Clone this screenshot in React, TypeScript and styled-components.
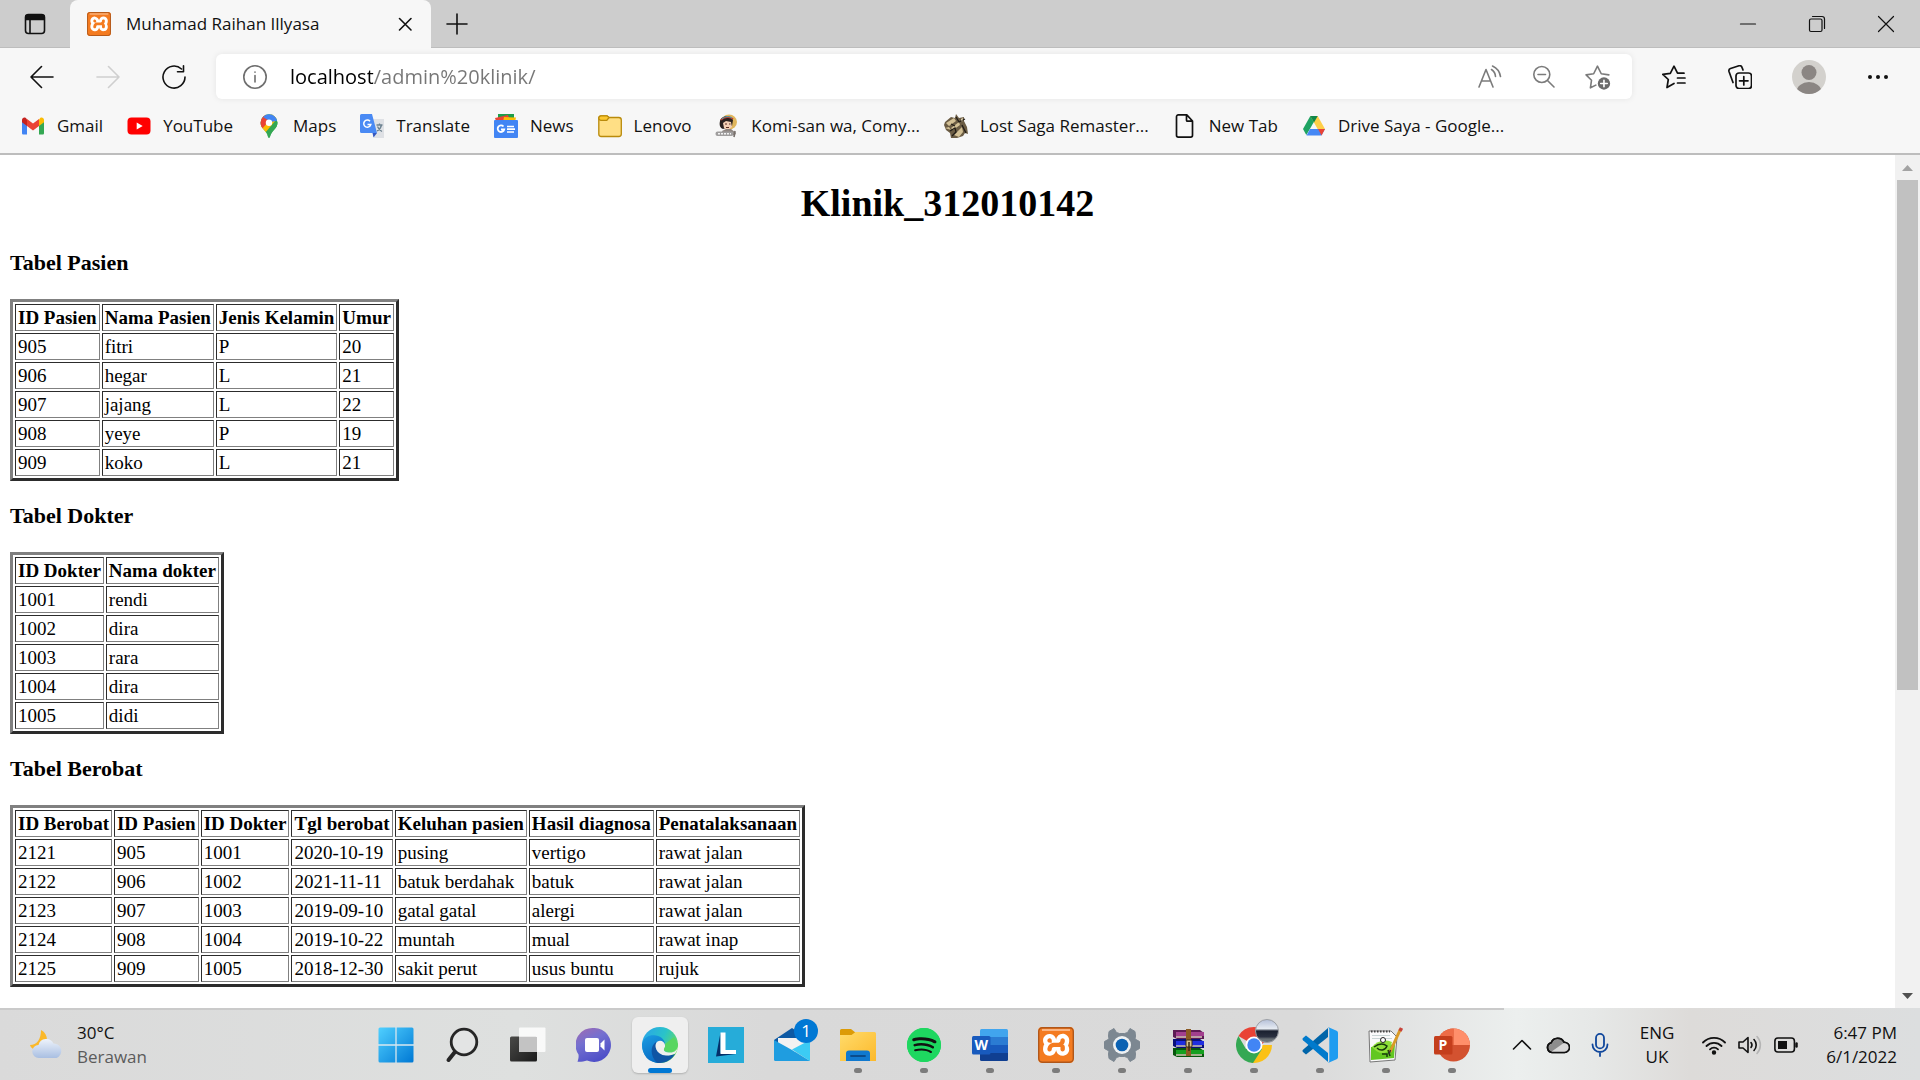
import React from "react";
import styled, { createGlobalStyle } from "styled-components";
import { SiXampp, SiSpotify } from "react-icons/si";

const GlobalStyle = createGlobalStyle`
  *, *::before, *::after { box-sizing: border-box; }
  body { margin: 0; background: #fff; }
  button { border: 0; background: none; padding: 0; margin: 0; color: inherit; font: inherit; cursor: pointer; }
  svg { display: block; flex: none; }
`;

const ui = `"Segoe UI", "Open Sans", "Noto Sans", sans-serif`;

const Desktop = styled.div`
  display: flex;
  flex-direction: column;
  height: 100vh;
  min-width: 0;
  overflow: hidden;
  font-family: ${ui};
  font-size: 17px;
  color: #111;
`;

/* ---------- browser chrome ---------- */

const TabStrip = styled.header`
  display: flex;
  flex: none;
  height: 48px;
  background: #cdcdcd;
  box-shadow: inset 0 -1px 0 #bdbdbd;
`;

const StripButton = styled.button<{ $width: number }>`
  display: flex;
  align-items: center;
  justify-content: center;
  width: ${(p) => p.$width}px;
  height: 48px;
`;

const Tab = styled.div`
  display: flex;
  align-items: center;
  width: 361px;
  height: 48px;
  padding: 0 14px 0 17px;
  background: #f7f7f7;
  border-radius: 8px 8px 0 0;
`;

const TabTitle = styled.span`
  flex: 1;
  margin-left: 15px;
  padding-bottom: 2px;
  white-space: nowrap;
`;

const WindowControls = styled.div`
  display: flex;
  margin-left: auto;
`;

const Toolbar = styled.nav`
  display: flex;
  flex: none;
  align-items: center;
  height: 57px;
  padding: 0 9px;
  background: #f7f7f7;
`;

const ToolButton = styled.button<{ $width?: number }>`
  display: flex;
  align-items: center;
  justify-content: center;
  flex: none;
  width: ${(p) => p.$width ?? 66}px;
  height: 44px;
`;

const AddressBar = styled.form`
  display: flex;
  flex: 1;
  align-items: center;
  height: 45px;
  margin: 0 9px;
  padding: 0 7px 0 12px;
  background: #fff;
  border-radius: 6px;
  box-shadow: 0 0 6px rgba(0, 0, 0, 0.08);
`;

const AddressInput = styled.input`
  flex: 1;
  min-width: 0;
  height: 30px;
  margin-left: 8px;
  padding: 0;
  border: 0;
  outline: 0;
  font: 20px ${ui};
  color: transparent;
  background: linear-gradient(90deg, #000 83px, #767676 83px);
  background-clip: text;
  -webkit-background-clip: text;
`;

const BookmarksBar = styled.nav`
  display: flex;
  flex: none;
  align-items: center;
  gap: 24px;
  height: 50px;
  padding: 0 21px 7px;
  background: #f7f7f7;
  border-bottom: 2px solid #bdbdbd;
`;

const Bookmark = styled.a`
  display: flex;
  align-items: center;
  gap: 12px;
  white-space: nowrap;
  text-decoration: none;
  color: #111;
`;

/* ---------- page ---------- */

const Viewport = styled.div`
  display: flex;
  flex: 1;
  min-height: 0;
  background: #fff;
`;

const Page = styled.main`
  display: flow-root;
  flex: 1;
  min-width: 0;
  overflow: hidden;
  padding: 0 10px;
  font-family: "Liberation Serif", "Times New Roman", serif;
  font-size: 19px;
  color: #000;
`;

const PageTitle = styled.h1`
  margin: 26px 0 25px;
  font-size: 38px;
  line-height: 44px;
  text-align: center;
`;

const Heading = styled.h3`
  margin: 0 0 24px;
  font-size: 22px;
  line-height: 25px;
`;

const Table = styled.table`
  margin-bottom: 22px;
  border: 3px solid;
  border-color: #808080 #2c2c2c #2c2c2c #808080;
  border-collapse: separate;
  border-spacing: 2px;
  th, td {
    padding: 1px 2px;
    border: 1px solid;
    border-color: #2c2c2c #808080 #808080 #2c2c2c;
    line-height: 23px;
    text-align: left;
    white-space: nowrap;
  }
`;

const Scrollbar = styled.div`
  display: flex;
  flex-direction: column;
  align-items: center;
  width: 25px;
  background: #f1f1f1;
`;

const ScrollArrow = styled.button`
  display: flex;
  align-items: center;
  justify-content: center;
  flex: none;
  width: 25px;
  height: 25px;
`;

const ScrollTrack = styled.div`
  flex: 1;
  width: 21px;
`;

const ScrollThumb = styled.div`
  height: 63.5%;
  background: #c1c1c1;
`;

/* ---------- taskbar ---------- */

const Taskbar = styled.footer`
  display: flex;
  flex: none;
  align-items: center;
  height: 72px;
  padding-top: 2px;
  background:
    linear-gradient(#cacaca, #cacaca) 0 0 / calc(100% - 416px) 2px no-repeat,
    linear-gradient(90deg, #dadada 0, #dee0df 27%, #d9d9d9 40%, #dadada 68%, #ecefee 79%, #e6e8e7 83%, #dddbd9 88%, #dcdedf 100%);
`;

const Weather = styled.button`
  display: flex;
  align-items: center;
  gap: 13px;
  width: 362px;
  padding-left: 27px;
  text-align: left;
`;

const Lines = styled.span<{ $align?: string }>`
  display: flex;
  flex-direction: column;
  line-height: 24px;
  text-align: ${(p) => p.$align ?? "left"};
`;

const Muted = styled.span`
  color: #5b5b5b;
`;

const Apps = styled.div`
  display: flex;
  gap: 10px;
  padding-left: 6px;
`;

const AppButton = styled.button<{ $active?: boolean }>`
  display: flex;
  flex-direction: column;
  align-items: center;
  justify-content: space-between;
  width: 56px;
  height: 56px;
  padding-top: 10px;
  border-radius: 6px;
  background: ${(p) => (p.$active ? "#efefef" : "transparent")};
  box-shadow: ${(p) => (p.$active ? "0 1px 2px rgba(0,0,0,.2)" : "none")};
`;

const IconHolder = styled.span`
  position: relative;
  width: 36px;
  height: 36px;
`;

const Badge = styled.span`
  position: absolute;
  top: -8px;
  right: -8px;
  width: 24px;
  height: 24px;
  border-radius: 50%;
  background: #0078d4;
  color: #fff;
  font-size: 17px;
  line-height: 24px;
  text-align: center;
`;

const Indicator = styled.span<{ $state: "none" | "open" | "active" }>`
  width: ${(p) => (p.$state === "active" ? 24 : 8)}px;
  height: 5px;
  border-radius: 3px;
  background: ${(p) => (p.$state === "none" ? "transparent" : p.$state === "open" ? "#7c7c7c" : "#0078d4")};
`;

const Tray = styled.div`
  display: flex;
  align-items: center;
  margin-left: auto;
  padding-right: 23px;
`;

const TrayButton = styled.button<{ $width: number }>`
  display: flex;
  align-items: center;
  justify-content: center;
  width: ${(p) => p.$width}px;
  height: 48px;
`;

const Clock = styled.button`
  width: 87px;
`;

/* ---------- icons ---------- */

type LineProps = { size?: number; color?: string; width?: number; children: React.ReactNode };
const Line = ({ size = 24, color = "#111", width = 1.6, children }: LineProps) => (
  <svg width={size} height={size} viewBox="0 0 24 24" fill="none" stroke={color} strokeWidth={width} strokeLinecap="round" strokeLinejoin="round">
    {children}
  </svg>
);

const XamppIcon = ({ size }: { size: number }) => (
  <svg width={size} height={size} viewBox="0 0 36 36">
    <rect x="2" y="2" width="32" height="32" rx="3" fill="#fff" />
    <SiXampp x="0" y="0" size={36} color="#f47b20" />
    <rect x="0.7" y="0.7" width="34.6" height="34.6" rx="4" fill="none" stroke="#b0571a" strokeWidth="1.4" />
    <path d="M4 3h28" stroke="#fbb582" strokeWidth="2" />
  </svg>
);

const GmailIcon = () => (
  <svg width="24" height="24" viewBox="0 0 24 24">
    <path d="M1 6v13.200c0 .8.600 1.300 1.300 1.300H6V10z" fill="#4285f4" />
    <path d="M23 6v13.200c0 .8-.6 1.300-1.300 1.300H18V10z" fill="#34a853" />
    <path d="M18 5.500V12l5-3.800V6c0-2-2.200-3.200-3.800-2z" fill="#fbbc04" />
    <path d="M6 12V5l6 4.600L18 5v7l-6 4.600z" fill="#ea4335" />
    <path d="M1 6v2.200L6 12V5.300L4.800 4C3.200 2.800 1 4 1 6z" fill="#c5221f" />
  </svg>
);
const YoutubeIcon = () => (
  <svg width="24" height="24" viewBox="0 0 24 24">
    <rect x="0.500" y="3.500" width="23" height="17" rx="4" fill="#f00" />
    <path d="M9.700 8.500v7l6-3.500z" fill="#fff" />
  </svg>
);
const MapsIcon = () => (
  <svg width="24" height="24" viewBox="0 0 24 24">
    <clipPath id="pin"><path d="M12 0.300a8.500 8.500 0 0 0-8.500 8.500c0 6 6.500 8 7.500 14 .3 1.200 1.700 1.200 2 0 1-6 7.500-8 7.500-14A8.500 8.500 0 0 0 12 .3z" /></clipPath>
    <g clipPath="url(#pin)">
      <path d="M0 0h24v24H0z" fill="#34a853" />
      <path d="M0 16L14 0h10L8 19z" fill="#fbbc04" />
      <path d="M0 14V0h8l4 7-8 9z" fill="#ea4335" />
      <path d="M6 3l4-3h14v6L14 8z" fill="#4285f4" />
      <path d="M24 3L12 17 9 24h15z" fill="#34a853" />
    </g>
    <circle cx="12" cy="8.800" r="3.200" fill="#fff" />
  </svg>
);
const TranslateIcon = () => (
  <svg width="24" height="24" viewBox="0 0 24 24">
    <path d="M9 5h15v19H14z" fill="#dfe1e5" />
    <path d="M1.500 0H12l5 19H1.500A1.500 1.500 0 0 1 0 17.500v-16A1.500 1.500 0 0 1 1.500 0z" fill="#4a8af4" />
    <path d="M12.500 19H17l-3.500 4.500z" fill="#3457c0" />
    <path d="M10 7.200a3.600 3.600 0 1 0 .8 3.400H7.500" fill="none" stroke="#fff" strokeWidth="1.500" />
    <path d="M16.500 11h6M19.500 9.500V11M21.500 11c-.6 3-2.500 5-4.500 6M17.500 12.500c1 2.500 2.500 4 4.500 5" stroke="#6d8290" strokeWidth="1.300" fill="none" />
  </svg>
);
const NewsIcon = () => (
  <svg width="24" height="24" viewBox="0 0 24 24">
    <path d="M4 0h16v6H4z" fill="#1e9e4a" />
    <path d="M1 4l13-3 2 6H2z" fill="#ea4335" />
    <path d="M10 3l12 .5L21 8H9z" fill="#fbbc04" />
    <rect y="6" width="24" height="18" rx="1" fill="#4285f4" />
    <path d="M9.500 12.500a3.300 3.300 0 1 0 .7 3H7" fill="none" stroke="#fff" strokeWidth="1.800" />
    <path d="M13 12.500h7M13 15.200h8M13 18h7" stroke="#fff" strokeWidth="1.700" />
  </svg>
);
const FolderIcon = () => (
  <svg width="24" height="24" viewBox="0 0 24 24" stroke="#b98a0b" strokeWidth="1.300">
    <path d="M.8 4v16a2.500 2.500 0 0 0 2.500 2.500h17.500a2.500 2.500 0 0 0 2.500-2.500V6a2.500 2.500 0 0 0-2.500-2.500H11L9 1.800H3A2.200 2.200 0 0 0 .8 4z" fill="#ffdf85" />
    <path d="M.8 4A2.200 2.200 0 0 1 3 1.800h6l2 1.700-2.200 2.800H3A2.200 2.200 0 0 1 .8 4z" fill="#fcc830" />
  </svg>
);
const ComicIcon = () => (
  <svg width="24" height="24" viewBox="0 0 24 24">
    <ellipse cx="14" cy="8" rx="8" ry="7.500" fill="#e0b65c" />
    <path d="M5 7c1-5 10-7 13-1l-1 6-9 3c-3-1-4-4-3-8z" fill="#2a211e" />
    <path d="M6 6c3-3 9-4 12-1" stroke="#c03b2b" strokeWidth="1.600" fill="none" />
    <path d="M7 5c3-3 7-3 10-1" stroke="#4ba3b8" strokeWidth="1" fill="none" />
    <path d="M8 9l3-2 5 1 1 5-4 3-4-2z" fill="#f3cfb4" />
    <path d="M10 10h2M14 10h1.500M11 13.500h3" stroke="#5a2d20" />
    <path d="M7 17l4-2h5l5 4-1 2H8z" fill="#8e8580" />
    <rect x="0.500" y="17.500" width="18" height="4.500" rx="2" fill="#a09e9e" />
    <path d="M3 19.700h13" stroke="#f2f2f2" strokeWidth="1.500" strokeDasharray="2 1" />
    <path d="M20 17l-1 6" stroke="#77706c" strokeWidth="1.600" />
  </svg>
);
const SagaIcon = () => (
  <svg width="24" height="24" viewBox="0 0 24 24">
    <path d="M1 8l6-5 4 1 1-4 3 4 5-1v4l3 6 1 7-3-1-2 3-6 2H7l-1-5-4-3-2-5z" fill="#6b5c44" />
    <path d="M2 9l8-5 2 3-7 5zM7 14l8-6 1 3-7 5zM10 21l8-8 1 5-4 5zM1 14l4-1 2 3z" fill="#d3c095" />
    <path d="M12 3l3 5 6-3M7 10l4 2M6 17l5-3 1 4-4 4M18 11l4 8" stroke="#211c16" strokeWidth="1.300" fill="none" />
    <path d="M17 5l2-1-1 4z" fill="#efe2c0" />
  </svg>
);
const FileIcon = () => (
  <Line width={1.7}>
    <path d="M5.500.9h8.300L19.500 7v14.300a1.800 1.800 0 0 1-1.800 1.800H5.300a1.800 1.800 0 0 1-1.800-1.800V2.700A1.800 1.800 0 0 1 5.500.9zM13.500 1v5.200a1 1 0 0 0 1 1h5" />
  </Line>
);
const DriveIcon = () => (
  <svg width="24" height="24" viewBox="0 0 24 24">
    <path d="M8.300 2h7L8 14.800 4.300 21 1 15z" fill="#1ea362" />
    <path d="M8.300 2h7.400L23 15h-7.400z" fill="#ffcf48" />
    <path d="M12 8.500L8.300 2h7.400z" fill="#11874a" />
    <path d="M8 15h15l-3.500 6.500h-15z" fill="#4688f4" />
    <path d="M16 15h7l-3.500 6.500z" fill="#ea4335" />
  </svg>
);

const WindowsIcon = () => (
  <svg width="36" height="36" viewBox="0 0 36 36">
    <defs>
      <linearGradient id="win" x1="0" y1="0" x2="1" y2="1"><stop stopColor="#50d0ff" /><stop offset="1" stopColor="#0078d4" /></linearGradient>
    </defs>
    <rect x="0.500" y="0.500" width="35" height="35" rx="1.500" fill="url(#win)" />
    <path d="M18 0v36M0 18h36" stroke="#d7e7ef" strokeWidth="1.300" />
  </svg>
);
const SearchIcon = () => (
  <svg width="36" height="36" viewBox="0 0 36 36" fill="none" stroke="#262626">
    <circle cx="20" cy="15" r="12.800" fill="#e3e4e4" strokeWidth="2.800" />
    <path d="M10.500 25.500L4.500 33" strokeWidth="4" strokeLinecap="round" />
  </svg>
);
const TaskViewIcon = () => (
  <svg width="36" height="36" viewBox="0 0 36 36">
    <defs>
      <linearGradient id="tv" x1="0" y1="0" x2="1" y2="1"><stop stopColor="#4a4a48" /><stop offset="1" stopColor="#1a1a1a" /></linearGradient>
    </defs>
    <rect x="0" y="9.500" width="27" height="25" rx="1.500" fill="url(#tv)" />
    <rect x="9" y="0.500" width="26.500" height="24.500" rx="1" fill="#fff" fillOpacity=".82" />
    <path d="M9 10h18v15H9z" fill="#c3c3c3" />
  </svg>
);
const ChatIcon = () => (
  <svg width="36" height="36" viewBox="0 0 36 36">
    <defs>
      <linearGradient id="chat" x1="0" y1="0" x2="0.500" y2="1"><stop stopColor="#a26ab0" /><stop offset=".45" stopColor="#7470d0" /><stop offset="1" stopColor="#4f50c8" /></linearGradient>
    </defs>
    <path d="M18.500 1a17 17 0 1 1-7.500 32.500c-3 1-6 1.500-9.500 1.300 1-3 1.300-5 1-7.300A17 17 0 0 1 18.500 1z" fill="url(#chat)" />
    <rect x="9" y="11" width="14" height="14" rx="2" fill="#fff" />
    <path d="M24.500 16.500l4-4v11l-4-4z" fill="#fff" />
  </svg>
);
const EdgeIcon = () => (
  <svg width="36" height="36" viewBox="0 0 36 36">
    <defs>
      <linearGradient id="edgeTop" x1="0" y1="0.200" x2="1" y2="0.700"><stop stopColor="#2aa6e8" /><stop offset=".5" stopColor="#2ac3c9" /><stop offset="1" stopColor="#6fe04d" /></linearGradient>
      <linearGradient id="edgeLeft" x1="0" y1="0" x2=".4" y2="1"><stop stopColor="#1b9de2" /><stop offset="1" stopColor="#0a6cc4" /></linearGradient>
    </defs>
    <circle cx="18" cy="18" r="18" fill="url(#edgeTop)" />
    <path d="M0 17C2 9 9 7.500 14 8.500c6 1.200 9 5 9 9.500 0 0-5-4-8 0-2 4 0 9 6 11l-3 7C6 36 0 28 0 17z" fill="url(#edgeLeft)" />
    <path d="M14 15c-6 4-6 14 1 20.700 8 1.300 15-3 18-8.700-8 3-19 1-19-12z" fill="#0f55a4" />
    <path d="M36 18c0 5-4 8-9 7.500-3-.2-5-1.200-5-2.500s1.500-2 1-5c-.5-3-4-5.500-7.500-3.500C11 17.500 14 28 24 28.500c4 0 7-1 9-1.800 2-2.500 3-5 3-8.700z" fill="#efefef" />
    <path d="M23 17c1 3-1.500 4.500-1 6 .7 1.800 7 2.500 10.500.5C35 22 36 20 36 17l-4-7z" fill="#58d661" />
  </svg>
);
const LIcon = () => (
  <svg width="36" height="36" viewBox="0 0 36 36">
    <path d="M0 0h36v36H0z" fill="#26acd9" />
    <path d="M12.500 5.500L8 29.500l20-2.500-15.500-1z" fill="#04306a" />
    <path d="M12.500 5.500h5V23H28v4H12.500z" fill="#fff" />
  </svg>
);
const MailIcon = () => (
  <svg width="36" height="36" viewBox="0 0 36 36">
    <path d="M0 13L18 1l18 12v10H0z" fill="#0c59a4" />
    <path d="M4 11h28v10L18 26 4 16z" fill="#f2f2f2" />
    <path d="M0 13l18 10 18 11H1.500A1.500 1.500 0 0 1 0 32.500z" fill="#1f9de0" />
    <path d="M36 13L18 22.500 36 34z" fill="#3ccbf4" />
  </svg>
);
const ExplorerIcon = () => (
  <svg width="36" height="36" viewBox="0 0 36 36">
    <defs>
      <linearGradient id="fold" x1="0" y1="0" x2="1" y2="1"><stop stopColor="#ffdb6b" /><stop offset="1" stopColor="#fcb92b" /></linearGradient>
    </defs>
    <path d="M0 3.500A1.500 1.500 0 0 1 1.500 2H11l5 4v4H0z" fill="#dc9b07" />
    <path d="M0 8h11.500l4-3H34.500A1.500 1.500 0 0 1 36 6.500V34H0z" fill="url(#fold)" />
    <path d="M6 34v-7.500a3 3 0 0 1 3-3h18a3 3 0 0 1 3 3V34z" fill="#1079cf" />
    <path d="M11 29h14" stroke="#0a4c8c" strokeWidth="1.800" strokeLinecap="round" />
  </svg>
);
const SpotifyBase = styled.span`
  display: flex;
  align-items: center;
  justify-content: center;
  width: 34px;
  height: 34px;
  margin: 1px;
  border-radius: 50%;
  background: radial-gradient(#111 62%, #1ed760 64%);
`;
const WordIcon = () => (
  <svg width="36" height="36" viewBox="0 0 36 36" fontFamily="Open Sans, sans-serif">
    <path d="M8 3.500A1.500 1.500 0 0 1 9.500 2h25A1.500 1.500 0 0 1 36 3.500V10H8z" fill="#41a5ee" />
    <path d="M8 10h28v8H8z" fill="#2b7cd3" />
    <path d="M8 18h28v8H8z" fill="#185abd" />
    <path d="M8 26h28v6.500a1.500 1.500 0 0 1-1.500 1.500h-25A1.500 1.500 0 0 1 8 32.500z" fill="#103f91" />
    <rect y="9" width="18.500" height="18.500" rx="1.500" fill="#185abd" />
    <text x="9.200" y="23" fontSize="14" fontWeight="700" fill="#fff" textAnchor="middle">W</text>
  </svg>
);
const SettingsIcon = () => (
  <svg width="36" height="36" viewBox="0 0 36 36">
    <path d="M12.500 5.500L10 1.500 5 4.500 4.500 9 5 12 0.500 14.500v7L5 24l-.5 3L5 31.500l5 3 2.500-4 3-1h5l3 1 2.500 4 5-3 .5-4.500-.5-3 4.500-2.500v-7L31 12l.5-3L31 4.500l-5-3-2.500 4-3 1h-5z" fill="#7c8791" stroke="#7c8791" strokeLinejoin="round" />
    <circle cx="18" cy="18" r="9" fill="#eef1f3" />
    <circle cx="18" cy="18" r="6.300" fill="#0b62b3" />
  </svg>
);
const RarIcon = () => (
  <svg width="36" height="36" viewBox="0 0 36 36">
    {[["#a23f8e", "#5d1b54", 3], ["#1f2ee0", "#0a0f78", 12], ["#15a01f", "#07550c", 21]].map(([a, b, y]) => (
      <g key={String(y)}>
        <path d={`M3 ${Number(y)}l27 0 4 3v6H7l-4-2z`} fill={String(b)} />
        <path d={`M6 ${Number(y) + 2}h28v4H6z`} fill={String(a)} />
        <path d={`M6 ${Number(y) + 7}h26`} stroke="#e5d8c8" strokeWidth="1.400" />
      </g>
    ))}
    <path d="M16 2h5v27h-5z" fill="#8b5a22" />
    <rect x="16" y="13" width="6" height="7" rx="1" fill="#d7c18c" stroke="#3b2a13" />
    <path d="M19 15v9" stroke="#3b2a13" strokeWidth="1.500" />
  </svg>
);
const ChromeIcon = () => (
  <svg width="44" height="44" viewBox="0 0 44 44">
    <defs>
      <linearGradient id="photo" x1="0" y1="0" x2="0" y2="1">
        <stop stopColor="#b4bfd8" /><stop offset=".4" stopColor="#e6ebf2" /><stop offset=".5" stopColor="#1b2130" /><stop offset=".75" stopColor="#2a3040" /><stop offset=".85" stopColor="#6a7176" />
      </linearGradient>
    </defs>
    <g transform="translate(0 8)">
      <path d="M18 18L2.400 9a18 18 0 0 1 31.200 0z" fill="#e94335" />
      <path d="M18 18h18A18 18 0 0 1 15 35.700L26 22z" fill="#fbc116" />
      <path d="M18 18l8 4-9 14A18 18 0 0 1 2.400 9L10 22z" fill="#34a853" />
      <path d="M18 9.500h15.800l-8 8z" fill="#e94335" />
      <circle cx="18" cy="18" r="8.500" fill="#fff" />
      <circle cx="18" cy="18" r="6.700" fill="#4285f4" />
    </g>
    <circle cx="31" cy="12" r="11.500" fill="url(#photo)" stroke="#9da0a5" />
  </svg>
);
const ChromeHolder = styled.span`
  display: block;
  width: 44px;
  margin-top: -8px;
`;
const CodeIcon = () => (
  <svg width="36" height="36" viewBox="0 0 36 36">
    <path d="M26 1v9L4 27.500 1 25c-.7-.6-.7-1.500 0-2.200z" fill="#0065a9" />
    <path d="M26 35v-9L4 8.500 1 11c-.7.600-.7 1.500 0 2.200z" fill="#007acc" />
    <path d="M26 0l8.600 3.800A2.300 2.300 0 0 1 36 6v24a2.300 2.300 0 0 1-1.400 2.200L26 36c1-1 1.300-1.500 1.300-3V3c0-1.500-.3-2-1.300-3z" fill="#1f9cf0" />
  </svg>
);
const NotepadIcon = () => (
  <svg width="36" height="36" viewBox="0 0 36 36">
    <path d="M1 4h22l6 6-2 23-25 2z" fill="#fafafa" stroke="#777" />
    <path d="M3 4.500h19" stroke="#444" strokeWidth="2" strokeDasharray="1.500 1.500" />
    <path d="M4 8.500h18M4 11.500h20" stroke="#c9d5d5" />
    <path d="M3 20l24-3-1 14-23 2z" fill="#62c721" />
    <path d="M4 20c5-6 12-8 20-5l-3 9c-6 4-12 2-17-4z" fill="#8fe03a" />
    <path d="M6 20c4-3 9-4 13-1-2 5-7 5-10 2M14 27h5v3M20 23l2 6" stroke="#163b0a" strokeWidth="1.500" fill="none" />
    <circle cx="15" cy="13" r="2.500" fill="#fff" stroke="#222" />
    <path d="M32.500 2L22 25" stroke="#d99a27" strokeWidth="3" />
    <path d="M33.500 1l-1.500 3" stroke="#c8433a" strokeWidth="3.500" />
    <path d="M22.500 23l-1.500 4" stroke="#333" strokeWidth="1.500" />
  </svg>
);
const PowerPointIcon = () => (
  <svg width="36" height="36" viewBox="0 0 36 36" fontFamily="Open Sans, sans-serif">
    <circle cx="19.500" cy="18" r="16.500" fill="#d35230" />
    <path d="M19.500 1.500A16.500 16.500 0 0 1 36 18H19.500z" fill="#ff8f6b" />
    <path d="M19.500 1.500V18H3A16.500 16.500 0 0 1 19.500 1.500z" fill="#ed6c47" />
    <rect y="9" width="18.500" height="18.500" rx="1.500" fill="#c43e1c" />
    <text x="9" y="23" fontSize="14" fontWeight="700" fill="#fff" textAnchor="middle">P</text>
  </svg>
);

const WeatherIcon = () => (
  <svg width="37" height="36" viewBox="0 0 37 36">
    <defs>
      <linearGradient id="cloud" x1="0" y1="0" x2="0" y2="1"><stop stopColor="#eef3fb" /><stop offset="1" stopColor="#a9bfe2" /></linearGradient>
    </defs>
    <path d="M14 3c8 4 8 16 0 19-5 2-10 0-11-4 7 0 11-6 11-15z" fill="#fbb829" />
    <path d="M12 31a6.500 6.500 0 0 1-.5-13 8 8 0 0 1 15-1.500 7.500 7.500 0 0 1 3 14.500z" fill="url(#cloud)" />
  </svg>
);

/* ---------- data ---------- */

const bookmarks: [string, React.ReactNode][] = [
  ["Gmail", <GmailIcon />],
  ["YouTube", <YoutubeIcon />],
  ["Maps", <MapsIcon />],
  ["Translate", <TranslateIcon />],
  ["News", <NewsIcon />],
  ["Lenovo", <FolderIcon />],
  ["Komi-san wa, Comy...", <ComicIcon />],
  ["Lost Saga Remaster...", <SagaIcon />],
  ["New Tab", <FileIcon />],
  ["Drive Saya - Google...", <DriveIcon />],
];

type App = { name: string; icon: React.ReactNode; state: "none" | "open" | "active"; badge?: string };
const apps: App[] = [
  { name: "Start", icon: <WindowsIcon />, state: "none" },
  { name: "Search", icon: <SearchIcon />, state: "none" },
  { name: "Task view", icon: <TaskViewIcon />, state: "none" },
  { name: "Chat", icon: <ChatIcon />, state: "none" },
  { name: "Edge", icon: <EdgeIcon />, state: "active" },
  { name: "Lenovo Vantage", icon: <LIcon />, state: "none" },
  { name: "Mail", icon: <MailIcon />, state: "none", badge: "1" },
  { name: "File Explorer", icon: <ExplorerIcon />, state: "open" },
  { name: "Spotify", icon: <SpotifyBase><SiSpotify size={34} color="#1ed760" /></SpotifyBase>, state: "open" },
  { name: "Word", icon: <WordIcon />, state: "open" },
  { name: "XAMPP", icon: <XamppIcon size={36} />, state: "open" },
  { name: "Settings", icon: <SettingsIcon />, state: "open" },
  { name: "WinRAR", icon: <RarIcon />, state: "open" },
  { name: "Chrome", icon: <ChromeHolder><ChromeIcon /></ChromeHolder>, state: "open" },
  { name: "Visual Studio Code", icon: <CodeIcon />, state: "open" },
  { name: "Notepad++", icon: <NotepadIcon />, state: "open" },
  { name: "PowerPoint", icon: <PowerPointIcon />, state: "open" },
];

const tables = [
  {
    title: "Tabel Pasien",
    head: ["ID Pasien", "Nama Pasien", "Jenis Kelamin", "Umur"],
    rows: [
      ["905", "fitri", "P", "20"],
      ["906", "hegar", "L", "21"],
      ["907", "jajang", "L", "22"],
      ["908", "yeye", "P", "19"],
      ["909", "koko", "L", "21"],
    ],
  },
  {
    title: "Tabel Dokter",
    head: ["ID Dokter", "Nama dokter"],
    rows: [["1001", "rendi"], ["1002", "dira"], ["1003", "rara"], ["1004", "dira"], ["1005", "didi"]],
  },
  {
    title: "Tabel Berobat",
    head: ["ID Berobat", "ID Pasien", "ID Dokter", "Tgl berobat", "Keluhan pasien", "Hasil diagnosa", "Penatalaksanaan"],
    rows: [
      ["2121", "905", "1001", "2020-10-19", "pusing", "vertigo", "rawat jalan"],
      ["2122", "906", "1002", "2021-11-11", "batuk berdahak", "batuk", "rawat jalan"],
      ["2123", "907", "1003", "2019-09-10", "gatal gatal", "alergi", "rawat jalan"],
      ["2124", "908", "1004", "2019-10-22", "muntah", "mual", "rawat inap"],
      ["2125", "909", "1005", "2018-12-30", "sakit perut", "usus buntu", "rujuk"],
    ],
  },
];

const DataTable = ({ head, rows }: { head: string[]; rows: string[][] }) => (
  <Table>
    <thead>
      <tr>{head.map((h) => <th key={h} scope="col">{h}</th>)}</tr>
    </thead>
    <tbody>
      {rows.map((r) => (
        <tr key={r[0]}>{r.map((c, i) => <td key={i}>{c}</td>)}</tr>
      ))}
    </tbody>
  </Table>
);

export default function App() {
  return (
    <Desktop>
      <GlobalStyle />
      <TabStrip>
        <StripButton $width={70} aria-label="Tab actions">
          <Line><rect x="2.500" y="2.500" width="19" height="19" rx="3" /><path d="M3 3.500h18v4H3z" fill="#111" /><path d="M7 8v13" /></Line>
        </StripButton>
        <Tab>
          <XamppIcon size={24} />
          <TabTitle>Muhamad Raihan Illyasa</TabTitle>
          <StripButton $width={24} aria-label="Close tab">
            <Line><path d="M6.500 6.500l11.500 11.500M18 6.500L6.500 18" /></Line>
          </StripButton>
        </Tab>
        <StripButton $width={52} aria-label="New tab">
          <Line><path d="M12 2v20M2 12h20" /></Line>
        </StripButton>
        <WindowControls>
          <StripButton $width={69} aria-label="Minimize"><Line width={1.2}><path d="M4.500 12h15" /></Line></StripButton>
          <StripButton $width={69} aria-label="Restore">
            <Line width={1.2}><rect x="4.500" y="7" width="12.500" height="12.500" rx="1.500" /><path d="M7.500 4.500h9.500a2.500 2.500 0 0 1 2.500 2.500v9.500" /></Line>
          </StripButton>
          <StripButton $width={69} aria-label="Close"><Line width={1.2}><path d="M4.500 4.500l15 15M19.500 4.500l-15 15" /></Line></StripButton>
        </WindowControls>
      </TabStrip>

      <Toolbar aria-label="Navigation">
        <ToolButton aria-label="Back"><Line><path d="M23 12H1M11.500 1.500L1 12l10.500 10.500" /></Line></ToolButton>
        <ToolButton aria-label="Forward"><Line color="#cfcfcf"><path d="M1 12h22M12.500 1.500L23 12 12.500 22.500" /></Line></ToolButton>
        <ToolButton aria-label="Reload"><Line><path d="M23 12a11 11 0 1 1-3.500-8M21.500.8v6h-6" /></Line></ToolButton>
        <AddressBar onSubmit={(e) => e.preventDefault()}>
          <ToolButton type="button" $width={54} aria-label="Site information">
            <Line color="#6e6e6e"><circle cx="12" cy="12" r="11.200" /><path d="M12 10.500v6.500M12 7v.2" /></Line>
          </ToolButton>
          <AddressInput type="text" aria-label="Address" defaultValue="localhost/admin%20klinik/" spellCheck={false} />
          <ToolButton type="button" $width={54} aria-label="Read aloud">
            <Line color="#7b7b7b"><path d="M1 22L8 4.500 15 22M3.500 16h9M13.500 4.500a9 9 0 0 1 4 7M14.500 1a14 14 0 0 1 8 10.500" /></Line>
          </ToolButton>
          <ToolButton type="button" $width={54} aria-label="Zoom out">
            <Line color="#7b7b7b"><circle cx="9.800" cy="9.500" r="8" /><path d="M6 9.500h7.500M15.500 15.500l6.500 6.500" /></Line>
          </ToolButton>
          <ToolButton type="button" $width={54} aria-label="Add to favourites">
            <Line size={26} color="#7b7b7b" width={1.5}>
              <path d="M10 19.500L5 22l1-7-5-5 7-1 3.500-7L15 9l7 1" />
              <circle cx="17.500" cy="18" r="5.700" fill="#6b6b6b" stroke="none" />
              <path d="M17.500 15v6M14.500 18h6" stroke="#fff" />
            </Line>
          </ToolButton>
        </AddressBar>
        <ToolButton aria-label="Favourites">
          <Line width={1.7}><path d="M12 18.500l-7 4 1.300-8L.8 9.300l7.500-1L12 1.200l3.500 7H22M15.500 13H23M15.500 18H23" /></Line>
        </ToolButton>
        <ToolButton aria-label="Collections">
          <Line width={1.7}><rect x="8" y="8" width="15.500" height="15.500" rx="3" /><path d="M15.800 11.500v8.500M11.500 15.800H20M5 17.500L1 6.500a2.500 2.500 0 0 1 1.500-3L11 .8a2.500 2.500 0 0 1 3 1.600L15 5" /></Line>
        </ToolButton>
        <ToolButton $width={72} aria-label="Profile">
          <svg width="34" height="34" viewBox="0 0 34 34">
            <clipPath id="avatar"><circle cx="17" cy="17" r="17" /></clipPath>
            <g clipPath="url(#avatar)">
              <path d="M0 0h34v34H0z" fill="#d3d1cd" />
              <circle cx="17" cy="12.500" r="7.500" fill="#8b8683" />
              <ellipse cx="17" cy="32" rx="12.500" ry="10" fill="#8b8683" />
            </g>
          </svg>
        </ToolButton>
        <ToolButton aria-label="Settings and more">
          <Line><g fill="#111" stroke="none"><circle cx="4" cy="12" r="2" /><circle cx="12" cy="12" r="2" /><circle cx="20" cy="12" r="2" /></g></Line>
        </ToolButton>
      </Toolbar>

      <BookmarksBar aria-label="Bookmarks">
        {bookmarks.map(([name, icon]) => (
          <Bookmark key={name} href="#">{icon}<span>{name}</span></Bookmark>
        ))}
      </BookmarksBar>

      <Viewport>
        <Page>
          <PageTitle>Klinik_312010142</PageTitle>
          {tables.map((t) => (
            <section key={t.title}>
              <Heading>{t.title}</Heading>
              <DataTable head={t.head} rows={t.rows} />
            </section>
          ))}
        </Page>
        <Scrollbar>
          <ScrollArrow aria-label="Scroll up"><svg width="11" height="6"><path d="M5.500 0L11 6H0z" fill="#a3a3a3" /></svg></ScrollArrow>
          <ScrollTrack><ScrollThumb /></ScrollTrack>
          <ScrollArrow aria-label="Scroll down"><svg width="11" height="6"><path d="M0 0h11L5.500 6z" fill="#505050" /></svg></ScrollArrow>
        </Scrollbar>
      </Viewport>

      <Taskbar>
        <Weather>
          <WeatherIcon />
          <Lines><span>30°C</span><Muted>Berawan</Muted></Lines>
        </Weather>
        <Apps>
          {apps.map((a) => (
            <AppButton key={a.name} $active={a.state === "active"} aria-label={a.name}>
              <IconHolder>{a.icon}{a.badge && <Badge>{a.badge}</Badge>}</IconHolder>
              <Indicator $state={a.state} />
            </AppButton>
          ))}
        </Apps>
        <Tray>
          <TrayButton $width={36} aria-label="Hidden icons"><Line><path d="M3.500 16L12 7.500l8.500 8.500" /></Line></TrayButton>
          <TrayButton $width={36} aria-label="OneDrive">
            <Line><path d="M6 19.500a5 5 0 0 1-.8-9.800 7 7 0 0 1 12.800-.5 5 5 0 0 1 .5 10.300z" fill="#8d8d8d" /><path d="M5 19l12-8.500c4-1 6 1 6 4s-2 5-5 5H6z" fill="#d8d8d8" stroke="none" /><path d="M6 19.500a5 5 0 0 1-.8-9.800 7 7 0 0 1 12.800-.5 5 5 0 0 1 .5 10.300z" /></Line>
          </TrayButton>
          <TrayButton $width={48} aria-label="Microphone">
            <Line color="#10479c" width={1.8}><rect x="8" y="0.900" width="8" height="14.500" rx="4" /><path d="M4.500 11.500a7.500 7.500 0 0 0 15 0M12 19v4" /></Line>
          </TrayButton>
          <TrayButton $width={66}><Lines $align="center"><span>ENG</span><span>UK</span></Lines></TrayButton>
          <TrayButton $width={48} aria-label="Wi-Fi">
            <Line width={1.8}><path d="M1 9.500a15.500 15.500 0 0 1 22 0M4.500 13a10.500 10.500 0 0 1 15 0M8 16.300a5.700 5.700 0 0 1 8 0" /><circle cx="12" cy="19.500" r="1.300" fill="#111" /></Line>
          </TrayButton>
          <TrayButton $width={24} aria-label="Volume">
            <Line><path d="M1 9h4l5-4.500v15L5 15H1zM13 9.500a4 4 0 0 1 0 5M16 6.500a8 8 0 0 1 0 11" /><path d="M19 3.500a12.500 12.500 0 0 1 0 17" stroke="#b5b5b5" /></Line>
          </TrayButton>
          <TrayButton $width={48} aria-label="Battery">
            <Line><rect x="0.900" y="5" width="19.500" height="14" rx="3" /><rect x="4" y="8" width="9" height="8" fill="#111" stroke="none" /><path d="M22.500 10.500v3" strokeWidth={2.5} /></Line>
          </TrayButton>
          <Clock><Lines $align="right"><span>6:47 PM</span><span>6/1/2022</span></Lines></Clock>
        </Tray>
      </Taskbar>
    </Desktop>
  );
}
